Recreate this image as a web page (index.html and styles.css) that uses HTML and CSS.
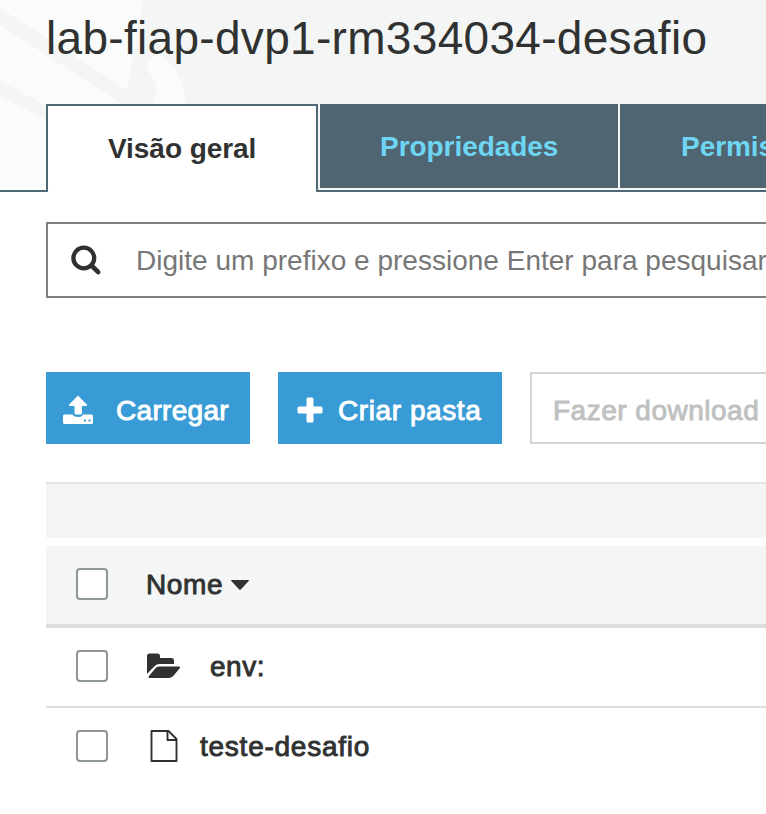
FILE: index.html
```
<!DOCTYPE html>
<html lang="pt-BR">
<head>
<meta charset="utf-8">
<title>lab-fiap-dvp1-rm334034-desafio</title>
<link rel="stylesheet" href="styles.css">
</head>
<body>
<header class="header">
  <svg class="pattern" width="766" height="190" viewBox="0 0 766 190" aria-hidden="true">
    <path d="M0 0H143L127 90L0 8Z M0 25L120 104H0Z M0 25L122 104L46 119L0 82Z M0 92L46 119V190H0Z" fill="#fafcfb"/>
    <path d="M0 81L46 105V119L0 97Z" fill="#f4f6f5"/>
    <path d="M159 54C175 63 185 83 185 104H153C159 92 158 80 147 71C147 63 151 57 159 54Z" fill="#fafcfb"/>
  </svg>
  <h1 class="title"><span>lab-fiap-dvp1-rm334034-desafio</span></h1>
  <nav class="tabs">
    <a class="tab tab-active"><span>Visão geral</span></a>
    <a class="tab"><span>Propriedades</span></a>
    <a class="tab tab-last"><span>Permissões</span></a>
  </nav>
</header>
<main class="content">
  <div class="search">
    <svg width="32" height="32" viewBox="0 0 32 32"><circle cx="13.8" cy="13" r="10.4" fill="none" stroke="#303231" stroke-width="4.3"/><path d="M21.5 20.5L28.2 27.200" stroke="#303231" stroke-width="4.6" stroke-linecap="round"/></svg>
    <span class="placeholder">Digite um prefixo e pressione Enter para pesquisar</span>
  </div>
  <div class="actions">
    <button class="btn upload">
      <svg width="30" height="30" viewBox="0 0 30 30" fill="#fff"><path d="M15 .5L24 9.7Q24.5 11 23 11H19V18Q19 19.5 17.5 19.5H13Q11.500 19.500 11.500 18V11H7Q5.500 11 6 9.700Z"/><path fill-rule="evenodd" d="M1.500 19.500H9.500Q11 22 15 22T20 19.500H28.500Q30 19.500 30 21V27.500Q30 29 28.500 29H1.500Q0 29 0 27.500V21Q0 19.500 1.500 19.500ZM21 24.500V26.500H23V24.500ZM25.500 24.500V26.500H27.500V24.500Z"/></svg>
      <span>Carregar</span>
    </button>
    <button class="btn create">
      <svg width="26" height="26" viewBox="0 0 26 26" fill="#fff"><rect x="9.500" y=".5" width="7" height="25" rx="1.500"/><rect x=".5" y="9.500" width="25" height="7" rx="1.500"/></svg>
      <span>Criar pasta</span>
    </button>
    <button class="btn download"><span>Fazer download</span></button>
  </div>
  <div class="toolbar"></div>
  <section class="table">
    <div class="row head"><i class="check"></i><span class="name">Nome</span><svg class="caret" width="18" height="10" viewBox="0 0 18 10"><path d="M.5 0H17.500Q18.500 .2 17.500 1.200L9.800 9.400Q9 10.200 8.200 9.400L.5 1.200Q-.5 .2 .5 0Z" fill="#303231"/></svg></div>
    <div class="row"><i class="check"></i>
      <svg class="folder" width="34" height="26" viewBox="0 0 34 26" fill="#303231"><path d="M0 21V3Q0 .5 2.500 .5H10.500Q13 .5 13 3V5H24.500Q27 5 27 7.500V11H12.500Q9.500 11 7.500 13.300Z"/><path d="M12 13.500H32Q33.800 13.800 32.700 15.300L26.500 22.800Q24.500 25 21.500 25H2.500Q.8 24.700 1.800 23.200L8 15.700Q9.800 13.500 12 13.500Z"/></svg>
      <span class="env">env:</span></div>
    <div class="row last"><i class="check"></i>
      <svg class="file" width="28" height="32" viewBox="0 0 28 32" fill="none" stroke="#303231" stroke-width="1.900" stroke-linejoin="round"><path d="M1.500 1H18.500L26.500 9V31H1.500Z"/><path d="M17.500 1V10H26.500"/></svg>
      <span class="obj">teste-desafio</span></div>
  </section>
</main>
</body>
</html>
```
FILE: styles.css
```
* { box-sizing: border-box; }
body { margin: 0; width: 766px; height: 814px; overflow: hidden; background: #fff; color: #303231; font: 28px/36px "Liberation Sans", Arial, sans-serif; white-space: nowrap; }
svg { display: block; flex: none; }
span { display: block; }
.header { position: relative; height: 192px; background: #f4f6f5; border-bottom: 2px solid #506876; }
.pattern { position: absolute; top: 0; left: 0; }
.title { position: relative; margin: 0; padding: 11px 0 0 46px; height: 104px; font-size: 46px; line-height: 54px; font-weight: 400; letter-spacing: .31px; }
.tabs { position: relative; display: flex; gap: 2px; width: 720px; height: 88px; margin-left: 46px; overflow: hidden; align-items: flex-start; }
.tab { flex: none; width: 298px; height: 84px; padding: 25px 0 0 60px; background: #4f6571; color: #6ed5f3; font-weight: 700; letter-spacing: -.05px; }
.tab-active { width: 272px; height: 88px; background: #fff; color: #303231; border: 2px solid #506876; border-bottom: 0; border-radius: 0 0 3px 3px; }
.tab-last { padding-left: 61px; }
/* the active tab opens onto the content below it */
.header::after { content: ""; position: absolute; left: 48px; top: 190px; width: 268px; height: 2px; background: #fff; }
.content { width: 720px; margin-left: 46px; overflow: hidden; }
.search { display: flex; align-items: center; gap: 34px; width: 760px; height: 76px; margin-top: 30px; padding: 2px 0 0 22px; border: 2px solid #808080; color: #777; }
.placeholder { letter-spacing: .01px; }
.actions { display: flex; gap: 28px; margin-top: 74px; }
.btn { flex: none; display: flex; align-items: center; height: 72px; padding: 6px 0 0; border: 0; color: #fff; background: #399bd5; font: inherit; -webkit-text-stroke: .9px currentColor; }
.upload { width: 204px; padding-left: 17px; gap: 23px; letter-spacing: .3px; }
.create { width: 224px; padding-left: 19px; gap: 15px; letter-spacing: .58px; }
.btn svg { margin-top: -2px; }
.download { width: 300px; padding-left: 21px; background: #fff; color: #bfc1c0; border: 2px solid #d5d5d5; letter-spacing: .5px; }
.toolbar { height: 56px; margin-top: 38px; background: #f4f6f5; border-top: 2px solid #e2e4e3; }
.table { margin-top: 8px; -webkit-text-stroke: .9px currentColor; }
.row { display: flex; align-items: center; height: 80px; padding: 0 0 2px 30px; border-bottom: 2px solid #ddd; }
.head { height: 82px; background: #f4f6f5; border-bottom-width: 4px; }
.last { border: 0; height: 78px; }
.check { flex: none; width: 32px; height: 32px; border: 2px solid #8e9598; border-radius: 4px; background: #fff; }
.name { margin: 2px 0 0 38px; letter-spacing: .6px; }
.caret { margin: 1px 0 0 8px; }
.folder { margin-left: 39px; }
.env { margin: 2px 0 0 29px; letter-spacing: .5px; }
.file { margin-left: 42px; }
.obj { margin: 2px 0 0 22px; letter-spacing: .75px; }
```
